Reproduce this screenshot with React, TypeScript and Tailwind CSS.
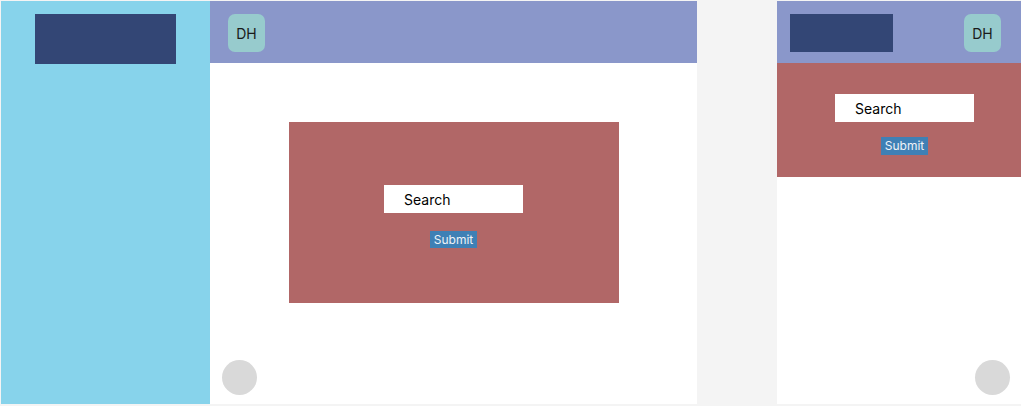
import React from "react";

function Avatar() {
  return (
    <div className="flex h-[38px] w-[37px] items-center justify-center rounded-[7px] bg-[#97cbcd] text-[14px] text-[#1a1a1a]">
      DH
    </div>
  );
}

function SearchForm({ compact }: { compact?: boolean }) {
  return (
    <div className="flex flex-col items-start">
      <div className="flex h-[28px] w-[139px] items-center bg-white pl-[20px] text-[14px] text-black">
        Search
      </div>
      <div
        className={
          compact
            ? "ml-[46px] mt-[15px] flex h-[18px] w-[47px] items-center justify-center bg-[#3f80b5] text-[12px] text-[#eef3f8]"
            : "ml-[46px] mt-[18px] flex h-[17px] w-[47px] items-center justify-center bg-[#3f80b5] text-[12px] text-[#eef3f8]"
        }
      >
        Submit
      </div>
    </div>
  );
}

export default function App() {
  return (
    <div
      className="flex h-[406px] w-[1021px] items-start gap-[80px] bg-[#f4f4f4] pl-[1px] pt-[1px]"
      style={{ fontFamily: "Inter, 'Liberation Sans', sans-serif" }}
    >
      {/* Desktop frame */}
      <div className="flex h-[403px] w-[696px]">
        <div className="flex h-full w-[209px] flex-col bg-[#87d3eb] px-[34px] pt-[13px]">
          <div className="h-[50px] w-[141px] bg-[#334675]" />
        </div>
        <div className="flex h-full w-[487px] flex-col bg-white">
          <div className="flex h-[62px] items-start bg-[#8a97ca] pl-[18px] pt-[13px]">
            <Avatar />
          </div>
          <div className="flex flex-1 flex-col">
            <div className="ml-[79px] mt-[59px] flex h-[181px] w-[330px] flex-col bg-[#b16767] pl-[95px] pt-[63px]">
              <SearchForm />
            </div>
            <div className="mb-[9px] ml-[12px] mt-auto h-[35px] w-[35px] rounded-full bg-[#d9d9d9]" />
          </div>
        </div>
      </div>

      {/* Mobile frame */}
      <div className="flex h-[403px] w-[244px] flex-col bg-white">
        <div className="flex h-[62px] items-start justify-between bg-[#8a97ca] pl-[13px] pr-[20px] pt-[13px]">
          <div className="h-[38px] w-[103px] bg-[#334675]" />
          <Avatar />
        </div>
        <div className="flex h-[114px] flex-col bg-[#b16767] pl-[58px] pt-[31px]">
          <SearchForm compact />
        </div>
        <div className="mb-[9px] mr-[11px] mt-auto h-[35px] w-[35px] self-end rounded-full bg-[#d9d9d9]" />
      </div>
    </div>
  );
}
